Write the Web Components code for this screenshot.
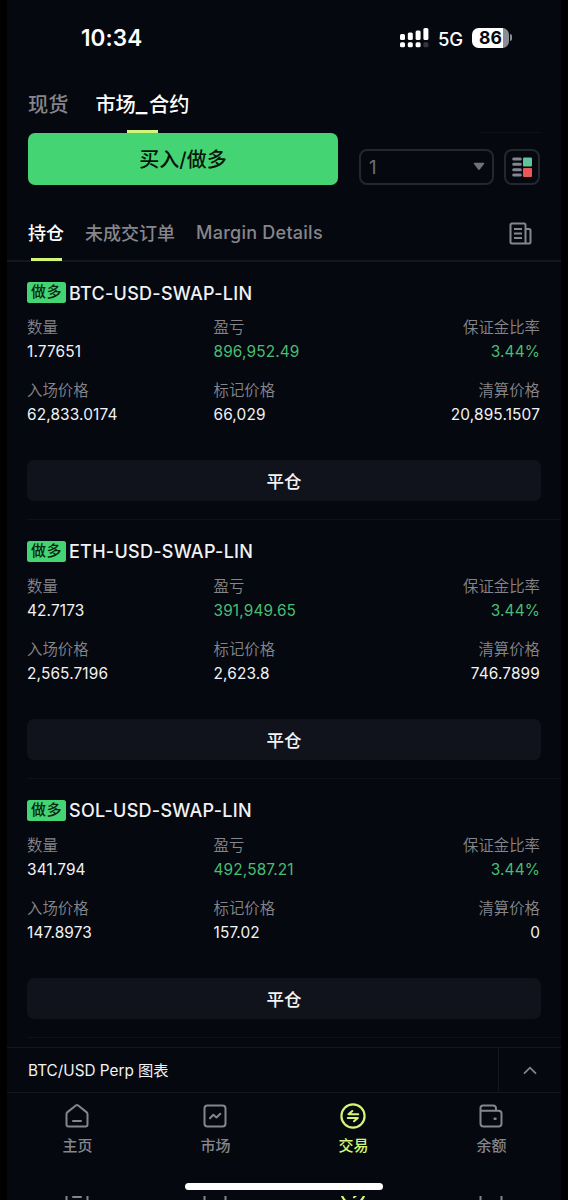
<!DOCTYPE html>
<html lang="zh-CN">
<head>
<meta charset="utf-8">
<title>Trade</title>
<style>
  body {
    margin: 0;
    background: #000;
    font-family: Inter, "Noto Sans CJK SC", sans-serif;
    color: #f1f2f4;
    --bg: #05080f;
    --line: #14181e;
    --muted: #85868b;
    --green: #45d473;
    --lime: #d3f578;
  }
</style>
</head>
<body>
<trade-app></trade-app>

<script>
class BaseElement extends HTMLElement {
  constructor(){
    super();
    this.attachShadow({ mode: 'open' });
  }

  connectedCallback(){
    const template = document.createElement('template');
    template.innerHTML = `<style>* { box-sizing: border-box; }${this.getStyles()}</style>${this.getTemplate()}`;
    this.shadowRoot.replaceChildren(template.content.cloneNode(true));
  }
}

const ICONS = {
  home: '<path d="M1.5 10.2Q1.5 9 2.5 8.1L10.8 1.5Q12 .6 13.2 1.5L21.5 8.1Q22.5 9 22.5 10.2V20.5Q22.5 22.5 20.5 22.5H3.5Q1.5 22.5 1.5 20.5Z"/><path d="M8 17H16"/>',
  market: '<rect x="1.5" y="1.5" width="21" height="21" rx="3"/><path d="M7 14.3L10.3 10.8L13.5 13.5L17.3 9.7"/>',
  trade: '<circle cx="12" cy="12" r="11.6" stroke-width="2.2"/><path d="M17.2 10.2H7.5L11.3 7M6.8 14H16.8L13 17.2" stroke-width="2.1"/>',
  wallet: '<path d="M1.5 6.5V19.5Q1.5 22.5 4.5 22.5H19.5Q22.5 22.5 22.5 19.5V9.5Q22.5 6.8 19.5 6.8H1.5V4Q1.5 1.5 4 1.5H14Q17 1.5 17 4.5V6.8"/><path d="M15.7 14.7H16.5" stroke-width="2.5"/>'
};

class AppIcon extends BaseElement {
  getTemplate(){
    return `<svg viewBox="-1 -1 26 26" width="26" height="26" fill="none" stroke="currentColor" stroke-width="2" stroke-linejoin="round" stroke-linecap="round">${ICONS[this.getAttribute('name')]}</svg>`;
  }

  getStyles(){
    return `
      :host { display: block; height: 26px; }
      svg { display: block; }
    `;
  }
}
customElements.define('app-icon', AppIcon);

class StatusBar extends BaseElement {
  getTemplate(){
    const bars = [6, 7.5, 9.5, 12].map((h, i) => `
      <rect x="${i * 7.8}" y="${12 - h}" width="5" height="${h}" rx="1.5" fill="#fff"/>
      <rect x="${i * 7.8}" y="14.3" width="5" height="5" rx="1.5" fill="${i === 3 ? '#34363b' : '#fff'}"/>`).join('');
    return `
      <time>10:34</time>
      <svg width="29" height="20" viewBox="0 0 29 20">${bars}</svg>
      <span class="net">5G</span>
      <span class="battery">86</span><i></i>
    `;
  }

  getStyles(){
    return `
      :host { display: flex; align-items: center; height: 75px; padding: 0 49px 0 74px; color: #fff; }
      time { font-size: 22.5px; font-weight: 600; flex: 1; letter-spacing: .1px; }
      .net { font-size: 18.5px; font-weight: 500; letter-spacing: -.3px; width: 34px; margin-left: 9px; padding-top: 2px; }
      .battery { width: 37px; height: 20px; border-radius: 6.5px; background: linear-gradient(90deg, #fff 31px, #8b8d92 31px); color: #05080f; font-size: 17.5px; line-height: 20px; font-weight: 700; text-align: center; }
      i { width: 2px; height: 7px; margin-left: 1px; border-radius: 0 3px 3px 0; background: #8b8d92; }
    `;
  }
}
customElements.define('status-bar', StatusBar);

class MarketTabs extends BaseElement {
  getTemplate(){
    return `<span>现货</span><span class="active">市场<u>_</u>合约</span><hr>`;
  }

  getStyles(){
    return `
      :host { display: flex; height: 58px; padding: 0 21px; gap: 27px; font-size: 20.2px; line-height: 60px; font-weight: 500; color: var(--muted); }
      .active { display: grid; grid-template-columns: auto auto auto; color: #fff; align-content: start; }
      u { width: 13.2px; text-decoration: none; font-size: 25px; line-height: 56px; height: 58px; }
      .active::after { content: ""; grid-column: 1 / -1; justify-self: center; width: 31px; height: 3px; margin-top: -5px; background: var(--lime); }
      hr { width: 62px; margin: auto -1px 0 auto; border: 0; border-top: 1px solid #0d1118; }
    `;
  }
}
customElements.define('market-tabs', MarketTabs);

class OrderBar extends BaseElement {
  getTemplate(){
    return `
      <button class="buy">买入/做多</button>
      <div class="select"><span>1</span><svg width="12" height="9"><path d="M1.5 .8H10.5Q12 .8 11 2L7 7.3Q6 8.5 5 7.3L1 2Q0 .8 1.5 .8Z" fill="#70727a"/></svg></div>
      <div class="book">
        <svg width="20" height="20" viewBox="0 0 20 20">
          <path d="M1.7 2H8.3M1.7 7.3H8.3M1.7 12.8H8.3M1.7 18H8.3" stroke="#858592" stroke-width="3" stroke-linecap="round"/>
          <rect x="11" y=".5" width="9" height="9" rx="1" fill="#5fc49a"/>
          <rect x="11" y="11" width="9" height="9" rx="1" fill="#eb5757"/>
        </svg>
      </div>
    `;
  }

  getStyles(){
    return `
      :host { display: flex; align-items: flex-end; height: 52px; padding: 0 21px; }
      .buy { width: 310px; height: 52px; padding: 0 0 2px; border: 0; border-radius: 7px; background: var(--green); color: #08150b; font: inherit; font-size: 20px; font-weight: 500; }
      .select, .book { display: flex; align-items: center; height: 36.5px; border: 2px solid #24282e; border-radius: 8px; }
      .select { width: 135px; margin: 0 10px 0 21px; padding: 0 7px 0 8px; justify-content: space-between; color: #70727a; font-size: 18.5px; }
      .book { width: 36px; justify-content: center; }
    `;
  }
}
customElements.define('order-bar', OrderBar);

class PositionTabs extends BaseElement {
  getTemplate(){
    return `
      <span class="active">持仓</span><span>未成交订单</span><span class="latin">Margin Details</span>
      <svg width="23" height="23" viewBox="0 0 23 23" fill="none" stroke="#858691" stroke-width="2" stroke-linejoin="round">
        <path d="M3 1.5H15Q16.5 1.5 16.5 3V21.5H3Q1.5 21.5 1.5 20V3Q1.5 1.5 3 1.5ZM16.5 7H20Q21.5 7 21.5 8.5V20Q21.5 21.5 20 21.5H16.5"/>
        <path d="M5 7H13M5 11.5H13M5 16H13"/>
      </svg>
    `;
  }

  getStyles(){
    return `
      :host { display: flex; height: 77px; padding: 0 29px 0 21px; gap: 21px; border-bottom: 2px solid var(--line); font-size: 18px; line-height: 97px; font-weight: 500; color: var(--muted); }
      .active { display: flex; flex-direction: column; align-items: center; color: #fff; }
      .active::after { content: ""; width: 31px; height: 3px; margin-top: -24px; background: var(--lime); flex: none; }
      .latin { letter-spacing: .25px; line-height: 95px; }
      svg { margin: 37px 0 0 auto; }
    `;
  }
}
customElements.define('position-tabs', PositionTabs);

class PositionCard extends BaseElement {
  getTemplate(){
    const [amount, pnl, entry, mark, liq] = this.getAttribute('values').split('|');
    const cells = [
      ['数量', amount], ['盈亏', pnl, 'up'], ['保证金比率', '3.44%', 'up'],
      ['入场价格', entry], ['标记价格', mark], ['清算价格', liq]
    ];
    return `
      <header><b>做多</b><slot></slot></header>
      <dl>${cells.map(([label, value, cls = '']) => `<div><dt>${label}</dt><dd class="${cls}">${value}</dd></div>`).join('')}</dl>
      <button>平仓</button>
      <hr>
    `;
  }

  getStyles(){
    return `
      :host { display: block; height: 258.8px; padding: 19px 20px 0; }
      header { display: flex; align-items: center; gap: 3px; height: 24px; font-size: 18px; font-weight: 500; letter-spacing: .27px; }
      b { width: 39px; height: 21px; margin-top: -1px; border-radius: 2.5px; background: var(--green); color: #08250f; font-size: 15px; line-height: 20px; font-weight: 500; text-align: center; letter-spacing: .4px; }
      dl { display: grid; grid-template-columns: 186.5px 1fr 1fr; row-gap: 15px; margin: 11px 0 0; font-size: 15.4px; }
      dt { height: 24px; line-height: 24px; color: var(--muted); font-weight: 350; }
      dd { height: 24px; line-height: 24px; margin: 0; letter-spacing: .14px; }
      dl div:nth-child(3n) { text-align: right; padding-right: 1px; }
      .up { color: #49bd73; }
      button { display: block; width: 100%; height: 41px; margin-top: 33px; padding: 0; border: 0; border-radius: 7px; background: #10131b; color: #f4f5f6; font: inherit; font-size: 17.5px; font-weight: 500; }
      hr { margin: 18px -20px 0 0; border: 0; border-top: 1.5px solid #0e1218; }
    `;
  }
}
customElements.define('position-card', PositionCard);

class ChartBar extends BaseElement {
  getTemplate(){
    return `<span><slot></slot></span><div><svg width="14" height="9" fill="none" stroke="#85868b" stroke-width="1.8"><path d="M1 7.7L7 1.7L13 7.7"/></svg></div>`;
  }

  getStyles(){
    return `
      :host { display: flex; height: 46px; border: solid var(--line); border-width: 1.5px 0 1px; padding-left: 21px; font-size: 15.3px; line-height: 45px; background: var(--bg); }
      span { flex: 1; }
      div { display: flex; align-items: center; justify-content: center; width: 63px; border-left: 1px solid var(--line); }
    `;
  }
}
customElements.define('chart-bar', ChartBar);

class NavItem extends BaseElement {
  getTemplate(){
    return `<app-icon name="${this.getAttribute('icon')}"></app-icon><slot></slot>`;
  }

  getStyles(){
    return `
      :host { display: flex; flex-direction: column; align-items: center; gap: 5px; width: 138px; font-size: 15px; line-height: 24px; color: var(--muted); font-weight: 500; }
      :host([active]) { color: var(--lime); }
    `;
  }
}
customElements.define('nav-item', NavItem);

class BottomNav extends BaseElement {
  getTemplate(){
    return `
      <nav>
        <nav-item icon="home">主页</nav-item>
        <nav-item icon="market">市场</nav-item>
        <nav-item icon="trade" active>交易</nav-item>
        <nav-item icon="wallet">余额</nav-item>
      </nav>
      <div class="indicator"></div>
      <div class="edge">${['home', 'market', 'trade', 'wallet'].map(name => `<app-icon name="${name}" class="${name}"></app-icon>`).join('')}</div>
    `;
  }

  getStyles(){
    return `
      :host { display: block; height: 107px; padding-top: 10px; }
      nav, .edge { display: flex; padding-left: 1.4px; }
      .indicator { width: 198px; height: 7px; margin: 25px auto 6px; border-radius: 4px; background: #fff; }
      .edge { height: 4px; overflow: hidden; color: var(--muted); }
      .edge app-icon { width: 26px; margin: -17px 56px 0; flex: none; }
      .edge .trade { color: var(--lime); }
    `;
  }
}
customElements.define('bottom-nav', BottomNav);

class TradeApp extends BaseElement {
  getTemplate(){
    return `
      <status-bar></status-bar>
      <market-tabs></market-tabs>
      <order-bar></order-bar>
      <position-tabs></position-tabs>
      <main>
        <position-card values="1.77651|896,952.49|62,833.0174|66,029|20,895.1507">BTC-USD-SWAP-LIN</position-card>
        <position-card values="42.7173|391,949.65|2,565.7196|2,623.8|746.7899">ETH-USD-SWAP-LIN</position-card>
        <position-card values="341.794|492,587.21|147.8973|157.02|0">SOL-USD-SWAP-LIN</position-card>
      </main>
      <chart-bar>BTC/USD Perp 图表</chart-bar>
      <bottom-nav></bottom-nav>
    `;
  }

  getStyles(){
    return `
      :host { display: flex; flex-direction: column; width: 554px; height: 1200px; margin-left: 7px; overflow: hidden; background: var(--bg); }
      main { flex: 1; min-height: 0; overflow: hidden; }
      status-bar, market-tabs, order-bar, position-tabs, chart-bar, bottom-nav { flex: none; }
    `;
  }
}
customElements.define('trade-app', TradeApp);
</script>
</body>
</html>
